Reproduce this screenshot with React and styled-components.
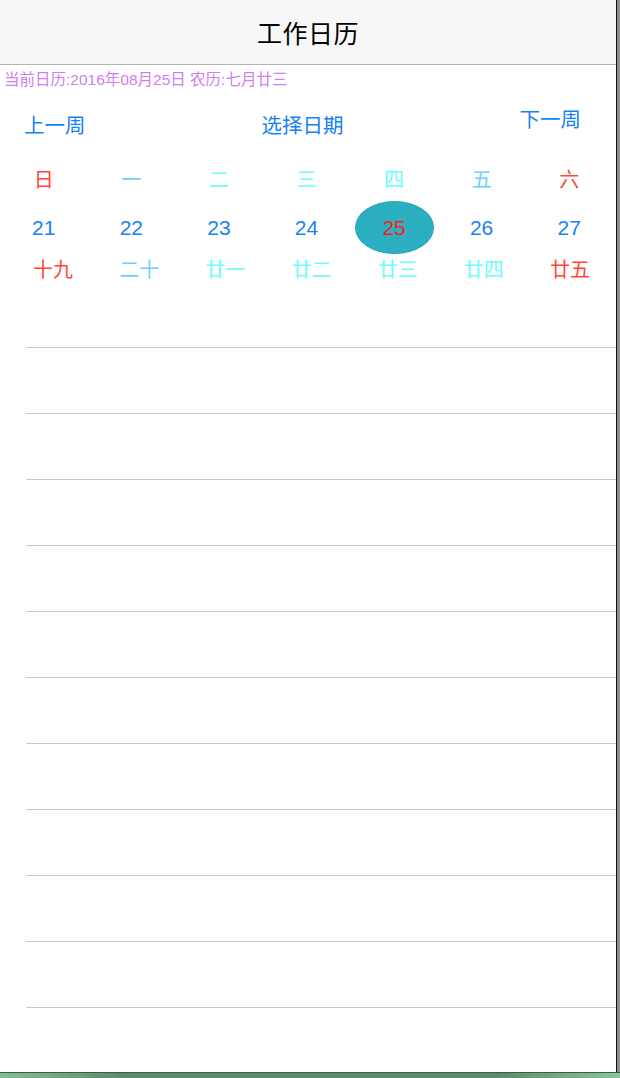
import React from 'react';
import styled, { createGlobalStyle } from 'styled-components';

const GlobalStyle = createGlobalStyle`
  html, body {
    margin: 0;
    padding: 0;
    background: #8d8f8e;
  }
  body {
    font-family: "Liberation Sans", "Noto Sans CJK SC", sans-serif;
  }
`;

const Page = styled.div`
  width: 620px;
  height: 1078px;
  display: flex;
  flex-direction: column;
  overflow: hidden;
`;

const Frame = styled.div`
  width: 616px;
  height: 1072px;
  background: #ffffff;
  border-right: 1px solid #111;
  display: flex;
  flex-direction: column;
`;

const Desk = styled.div`
  flex: 1;
  background: linear-gradient(90deg, #86bd96 0%, #5e8a6b 20%, #5d8a6a 80%, #8cc49c 100%);
  border-top: 1px solid #3d5a46;
`;

const NavBar = styled.header`
  height: 64px;
  background: #f7f7f7;
  border-bottom: 1px solid #b4b4b4;
  display: flex;
  align-items: center;
  justify-content: center;
`;

const Title = styled.h1`
  margin: 0;
  font-size: 25px;
  font-weight: 400;
  color: #000;
  letter-spacing: 0.5px;
`;

const Info = styled.div`
  margin-top: 5px;
  padding-left: 4px;
  height: 20px;
  line-height: 20px;
  font-size: 15.5px;
  color: #d07ef2;
`;

const WeekNav = styled.div`
  height: 50px;
  display: flex;
  align-items: flex-start;
  justify-content: space-between;
  padding: 0 35px 0 24px;
`;

const NavButton = styled.span`
  margin-top: ${p => (p.$raised ? '18px' : '24px')};
  font-size: 20.5px;
  line-height: 24px;
  color: #1681f5;
`;

const Row = styled.div`
  display: grid;
  grid-template-columns: repeat(7, 1fr);
  justify-items: center;
  align-items: center;
  padding-right: 3px;
`;

const WeekRow = styled(Row)`
  margin-top: 24px;
  height: 28px;
`;

const DateRow = styled(Row)`
  margin-top: 9px;
  height: 53px;
`;

const LunarRow = styled(Row)`
  margin-top: 4px;
  height: 24px;
  padding: 0 3px 0 10px;
`;

const WeekDay = styled.span`
  font-size: 20px;
  color: ${p => p.$color};
`;

const DateCell = styled.span`
  width: 79px;
  height: 53px;
  display: flex;
  align-items: center;
  justify-content: center;
  border-radius: 50%;
  font-size: 21px;
  box-sizing: border-box;
  color: ${p => (p.$active ? '#ff1a1a' : '#1681f5')};
  background: ${p => (p.$active ? '#2cafc0' : 'transparent')};
  border: 1px solid ${p => (p.$active ? '#29a2b3' : 'transparent')};
`;

const Lunar = styled.span`
  font-size: 20px;
  line-height: 24px;
  color: ${p => p.$color};
`;

const List = styled.div`
  display: flex;
  flex-direction: column;
`;

const Line = styled.div`
  height: 66px;
  margin-left: 26px;
  box-sizing: border-box;
  border-bottom: 1px solid #c8c8c8;
`;

const RED = '#ff4538';
const SKY = '#6ccffb';
const CYAN = '#6cfcfc';

const weekDays = [
  ['日', RED],
  ['一', SKY],
  ['二', CYAN],
  ['三', CYAN],
  ['四', CYAN],
  ['五', SKY],
  ['六', RED],
];

const dates = [21, 22, 23, 24, 25, 26, 27];

const lunars = [
  ['十九', RED],
  ['二十', SKY],
  ['廿一', CYAN],
  ['廿二', CYAN],
  ['廿三', CYAN],
  ['廿四', CYAN],
  ['廿五', RED],
];

export default function App() {
  return (
    <Page>
      <GlobalStyle />
      <Frame>
        <NavBar>
          <Title>工作日历</Title>
        </NavBar>
        <Info>当前日历:2016年08月25日 农历:七月廿三</Info>
        <WeekNav>
          <NavButton>上一周</NavButton>
          <NavButton>选择日期</NavButton>
          <NavButton $raised>下一周</NavButton>
        </WeekNav>
        <WeekRow>
          {weekDays.map(([d, c]) => (
            <WeekDay key={d} $color={c}>{d}</WeekDay>
          ))}
        </WeekRow>
        <DateRow>
          {dates.map(d => (
            <DateCell key={d} $active={d === 25}>{d}</DateCell>
          ))}
        </DateRow>
        <LunarRow>
          {lunars.map(([l, c]) => (
            <Lunar key={l} $color={c}>{l}</Lunar>
          ))}
        </LunarRow>
        <List>
          {Array.from({ length: 11 }).map((_, i) => (
            <Line key={i} />
          ))}
        </List>
      </Frame>
      <Desk />
    </Page>
  );
}
